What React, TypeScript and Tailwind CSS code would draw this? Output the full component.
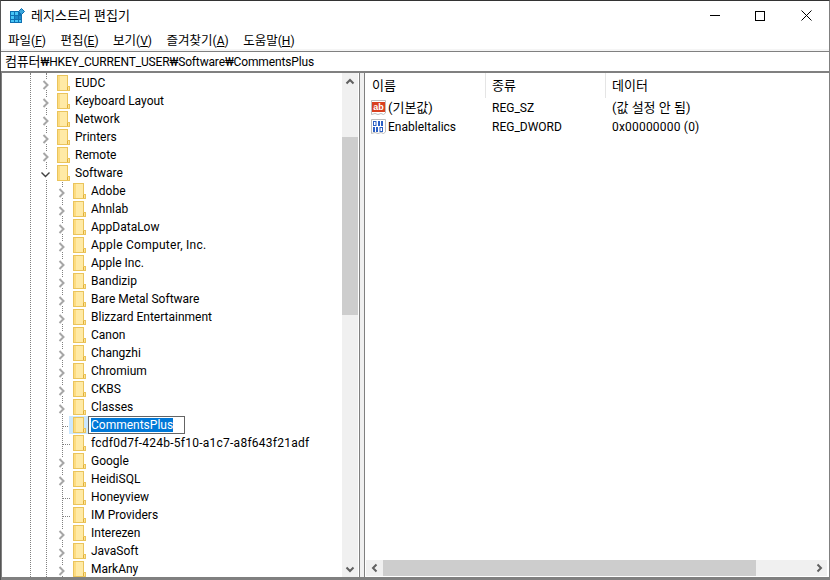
import React from 'react';

type Row = { name: string; level: 1 | 2; state: 'closed' | 'open' | 'leaf'; editing?: boolean; spacing?: string };

const rows: Row[] = [
    { name: 'EUDC', level: 1, state: 'closed' },
    { name: 'Keyboard Layout', level: 1, state: 'closed' },
    { name: 'Network', level: 1, state: 'closed' },
    { name: 'Printers', level: 1, state: 'closed' },
    { name: 'Remote', level: 1, state: 'closed' },
    { name: 'Software', level: 1, state: 'open' },
    { name: 'Adobe', level: 2, state: 'closed' },
    { name: 'Ahnlab', level: 2, state: 'closed' },
    { name: 'AppDataLow', level: 2, state: 'closed' },
    { name: 'Apple Computer, Inc.', level: 2, state: 'closed', spacing: 'tracking-[0.25px]' },
    { name: 'Apple Inc.', level: 2, state: 'closed' },
    { name: 'Bandizip', level: 2, state: 'closed' },
    { name: 'Bare Metal Software', level: 2, state: 'closed' },
    { name: 'Blizzard Entertainment', level: 2, state: 'closed' },
    { name: 'Canon', level: 2, state: 'closed' },
    { name: 'Changzhi', level: 2, state: 'closed' },
    { name: 'Chromium', level: 2, state: 'closed' },
    { name: 'CKBS', level: 2, state: 'closed' },
    { name: 'Classes', level: 2, state: 'closed' },
    { name: 'CommentsPlus', level: 2, state: 'leaf', editing: true },
    { name: 'fcdf0d7f-424b-5f10-a1c7-a8f643f21adf', level: 2, state: 'leaf', spacing: 'tracking-[0.25px]' },
    { name: 'Google', level: 2, state: 'closed' },
    { name: 'HeidiSQL', level: 2, state: 'closed' },
    { name: 'Honeyview', level: 2, state: 'leaf' },
    { name: 'IM Providers', level: 2, state: 'leaf' },
    { name: 'Interezen', level: 2, state: 'closed' },
    { name: 'JavaSoft', level: 2, state: 'closed' },
    { name: 'MarkAny', level: 2, state: 'closed' },
];

const menus = [
    { label: '파일', key: 'F' },
    { label: '편집', key: 'E' },
    { label: '보기', key: 'V' },
    { label: '즐겨찾기', key: 'A' },
    { label: '도움말', key: 'H' },
];

const AppIcon = () => (
    <svg width="16" height="16" viewBox="0 0 16 16" shapeRendering="crispEdges">
        <rect x="1" y="3" width="12" height="12" fill="#0f6fb0" />
        <rect x="2" y="4" width="3" height="3" fill="#46c4f5" />
        <rect x="6" y="4" width="3" height="3" fill="#46c4f5" />
        <rect x="2" y="8" width="3" height="3" fill="#46c4f5" />
        <rect x="6" y="8" width="3" height="3" fill="#1c86c8" />
        <rect x="10" y="8" width="2" height="3" fill="#1c86c8" />
        <rect x="2" y="12" width="3" height="2" fill="#46c4f5" />
        <rect x="6" y="12" width="3" height="2" fill="#46c4f5" />
        <rect x="10" y="12" width="2" height="2" fill="#46c4f5" />
        <path d="M12.5 0.5 L15.5 3.5 L12.5 6.5 L9.5 3.5 Z" fill="#3aa6dc" stroke="#0f6fb0" shapeRendering="auto" />
    </svg>
);

const Folder = () => (
    <svg width="14" height="16" viewBox="0 0 14 16" className="relative shrink-0" shapeRendering="crispEdges">
        <path d="M0.5 0.5 H10.5 V11.5 H12.5 V15.5 H0.5 Z" fill="#ffe596" stroke="#eac45c" />
        <rect x="1" y="1" width="2" height="14" fill="#fddc80" />
        <rect x="3" y="1" width="7" height="14" fill="#ffeaa6" />
        <rect x="10" y="12" width="1" height="3" fill="#e2ae35" />
    </svg>
);

const Chevron = ({ open }: { open: boolean }) => (
    <svg width="9" height="10" viewBox="0 0 9 10" className="relative mt-[4px] shrink-0 bg-white">
        {open ? (
            <path d="M0.5 2.5 L4.5 6.5 L8.5 2.5" fill="none" stroke="#404040" strokeWidth="1.4" />
        ) : (
            <path d="M2.5 1 L6.5 5 L2.5 9" fill="none" stroke="#a6a6a6" strokeWidth="2" />
        )}
    </svg>
);

const ArrowIcon = ({ dir }: { dir: 'up' | 'down' | 'left' | 'right' }) => {
    const d = {
        up: 'M1.5 6.5 L5 3 L8.5 6.5',
        down: 'M1.5 3.5 L5 7 L8.5 3.5',
        left: 'M6.5 1.5 L3 5 L6.5 8.5',
        right: 'M3.5 1.5 L7 5 L3.5 8.5',
    }[dir];
    return (
        <svg width="10" height="10" viewBox="0 0 10 10">
            <path d={d} fill="none" stroke="#606060" strokeWidth="2" />
        </svg>
    );
};

const DocBase = ({ children }: { children: React.ReactNode }) => (
    <svg width="16" height="16" viewBox="0 0 16 16" className="shrink-0">
        <path d="M0.5 0.5 H14.5 V13 L12.5 14.5 L10 13.5 L7 14.5 L4 13.5 L0.5 14.5 Z" fill="#fff" stroke="#bdbdbd" />
        {children}
    </svg>
);

const Hangul = ({ children }: { children: React.ReactNode }) => <span className="text-[13px]">{children}</span>;

const TreeRow = ({ row }: { row: Row }) => (
    <div className={`relative flex h-[18px] items-center ${row.level === 1 ? 'pl-[39px]' : 'pl-[55px]'}`}>
        <div className="flex w-[15px] items-center justify-start">
            {row.state === 'leaf' ? (
                <div className="mt-[3px] ml-[6px] w-[7px] border-t border-dotted border-[#808080]" />
            ) : (
                <Chevron open={row.state === 'open'} />
            )}
        </div>
        <div className="relative flex h-[18px] w-[16px] items-center justify-center">
            {row.editing && <div className="absolute inset-y-0 -left-[3px] right-0 bg-[#cce8ff]" />}
            <Folder />
        </div>
        {row.editing ? (
            <div className="flex h-[18px] w-[97px] items-center border border-[#646464] bg-white pl-[2px]">
                <span className="bg-[#0078d7] leading-[14px] text-white">{row.name}</span>
            </div>
        ) : (
            <span className={`ml-[3px] whitespace-nowrap text-black ${row.spacing ?? ''}`}>{row.name}</span>
        )}
    </div>
);

export default function App() {
    return (
        <div
            className="flex h-[580px] w-[830px] flex-col overflow-hidden border-t border-r border-l border-t-[#333] border-r-[#808080] border-l-[#555] bg-white text-[12px] text-black"
            style={{ fontFamily: 'Roboto, "Noto Sans CJK KR", sans-serif' }}
        >
            {/* Title bar */}
            <div className="flex h-[29px] shrink-0 items-center pl-[8px]">
                <AppIcon />
                <span className="ml-[6px] text-[13px]">레지스트리 편집기</span>
                <div className="ml-auto flex items-center">
                    <div className="mr-[35px] h-[1px] w-[10px] bg-black" />
                    <div className="mr-[36px] h-[10px] w-[10px] border border-black" />
                    <svg width="11" height="11" viewBox="0 0 11 11" className="mr-[17px]">
                        <path d="M0.5 0.5 L10.5 10.5 M10.5 0.5 L0.5 10.5" stroke="#000" strokeWidth="1" />
                    </svg>
                </div>
            </div>

            {/* Menu */}
            <div className="flex h-[21px] shrink-0 items-center gap-[14.5px] border-b-2 border-[#f5f5f5] pt-[3px] pl-[7px]">
                {menus.map(m => (
                    <span key={m.key}>
                        <span className="text-[12.5px]">{m.label}</span>(<span className="underline">{m.key}</span>)
                    </span>
                ))}
            </div>

            {/* Address bar */}
            <div className="flex h-[22px] shrink-0 items-center border-t border-b-2 border-[#808080] pl-[4px] tracking-[-0.15px]">
                <Hangul>컴퓨터</Hangul>₩HKEY_CURRENT_USER₩Software₩CommentsPlus
            </div>

            <div className="flex min-h-0 flex-1 border-b-[3px] border-[#808080]">
                {/* Tree */}
                <div className="relative flex w-[341px] shrink-0 flex-col overflow-hidden border-l border-[#808080] pt-[1px]">
                    <div className="absolute top-0 bottom-0 left-[28px] border-l border-dotted border-[#808080]" />
                    <div className="absolute top-0 bottom-0 left-[44px] border-l border-dotted border-[#808080]" />
                    <div className="absolute top-[109px] bottom-0 left-[60px] border-l border-dotted border-[#808080]" />
                    {rows.map(r => (
                        <TreeRow key={r.name} row={r} />
                    ))}
                </div>

                {/* Tree scrollbar */}
                <div className="flex w-[16px] shrink-0 flex-col items-center bg-[#f0f0f0]">
                    <div className="flex h-[17px] items-center justify-center">
                        <ArrowIcon dir="up" />
                    </div>
                    <div className="mt-[47px] h-[178px] w-full bg-[#cdcdcd]" />
                    <div className="mt-auto flex h-[17px] items-center justify-center">
                        <ArrowIcon dir="down" />
                    </div>
                </div>

                <div className="w-[1px] shrink-0" />
                <div className="w-[6px] shrink-0 border-x-[1px] border-[#808080] bg-[#f0f0f0]" />

                {/* Values */}
                <div className="flex min-w-0 flex-1 flex-col">
                    <div className="flex h-[25px] shrink-0 items-center">
                        <div className="h-full w-[121px] border-r border-[#e5e5e5] pt-[3px] pl-[7px]"><Hangul>이름</Hangul></div>
                        <div className="h-full w-[120px] border-r border-[#e5e5e5] pt-[3px] pl-[6px]"><Hangul>종류</Hangul></div>
                        <div className="h-full pt-[3px] pl-[6px]"><Hangul>데이터</Hangul></div>
                    </div>
                    <div className="flex h-[19px] items-center pl-[6px]">
                        <div className="flex w-[115px] items-center gap-[1px]">
                            <DocBase>
                                <rect x="1" y="2" width="13" height="10" fill="#d9401f" />
                                <text x="7.5" y="10" textAnchor="middle" fontSize="9" fontWeight="700" fill="#fff" fontFamily="Liberation Sans">ab</text>
                            </DocBase>
                            <Hangul>(기본값)</Hangul>
                        </div>
                        <div className="w-[120px] pl-[6px]">REG_SZ</div>
                        <div className="pl-[6px]"><Hangul>(값 설정 안 됨)</Hangul></div>
                    </div>
                    <div className="flex h-[19px] items-center pl-[6px]">
                        <div className="flex w-[115px] items-center gap-[1px]">
                            <DocBase>
                                <rect x="2.5" y="2.5" width="2.5" height="4" fill="none" stroke="#2b5fc4" />
                                <rect x="7" y="2" width="2" height="5" fill="#2b5fc4" />
                                <rect x="10" y="2" width="2" height="5" fill="#2b5fc4" />
                                <rect x="2" y="8" width="2" height="5" fill="#2b5fc4" />
                                <rect x="5" y="8" width="2" height="5" fill="#2b5fc4" />
                                <rect x="9" y="8.5" width="2.5" height="4" fill="none" stroke="#2b5fc4" />
                            </DocBase>
                            <span>EnableItalics</span>
                        </div>
                        <div className="w-[120px] pl-[6px]">REG_DWORD</div>
                        <div className="pl-[6px] tracking-[0.2px]">0x00000000 (0)</div>
                    </div>

                    {/* Horizontal scrollbar */}
                    <div className="mt-auto mb-[1px] ml-[1px] flex h-[16px] w-[461px] shrink-0 items-center bg-[#f0f0f0]">
                        <div className="flex w-[17px] items-center justify-center">
                            <ArrowIcon dir="left" />
                        </div>
                        <div className="h-full w-[373px] bg-[#cdcdcd]" />
                        <div className="ml-auto flex w-[17px] items-center justify-center">
                            <ArrowIcon dir="right" />
                        </div>
                    </div>
                </div>
            </div>
        </div>
    );
}
